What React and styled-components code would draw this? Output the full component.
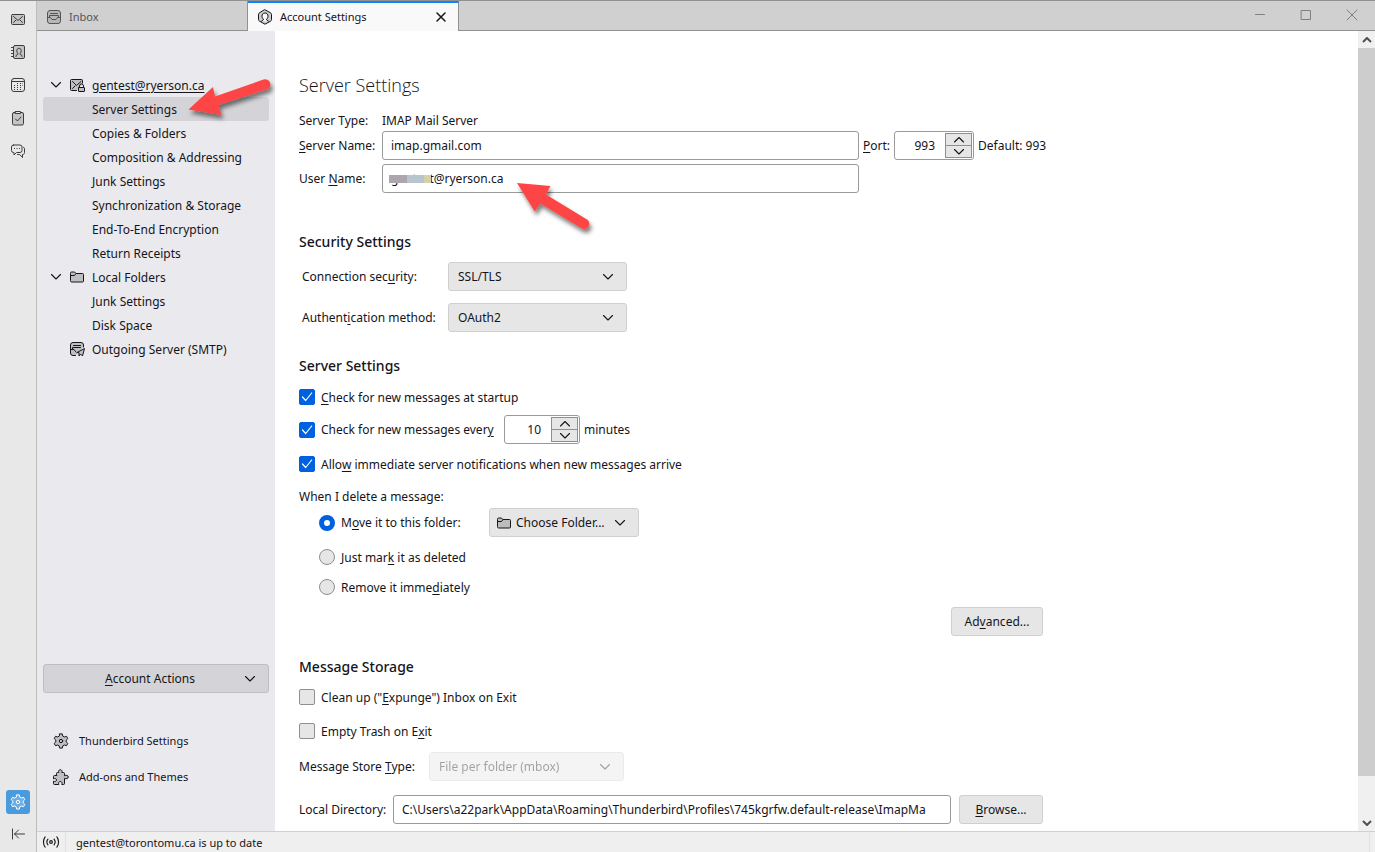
import React from 'react';
import styled, { createGlobalStyle, ThemeProvider } from 'styled-components';

const theme = {
  color: {
    text: '#15141a',
    sidebar: '#eaeaee',
    selected: '#d4d4d8',
    button: '#e6e6e6',
    buttonBorder: '#cfcfcf',
    inputBorder: '#9a9a9a',
    line: '#919191',
    accent: '#0061e0',
    arrow: '#fd4444',
  },
};

const GlobalStyle = createGlobalStyle`
  * {
    box-sizing: border-box;
  }

  body {
    margin: 0;
    font-family: "Noto Sans", "Open Sans", sans-serif;
    font-size: 12px;
    line-height: 21px;
    color: #15141a;
    background-color: #fff;
  }

  button, input, select {
    font: inherit;
    color: inherit;
  }

  u {
    text-underline-offset: 2px;
    text-decoration-thickness: 1px;
  }
`;

const Icon = ({ size = 16, children }) => (
  <svg width={size} height={size} viewBox="0 0 16 16" fill="none" stroke="currentColor" strokeLinecap="round" strokeLinejoin="round" aria-hidden="true">
    {children}
  </svg>
);

const shade = { fill: 'currentColor', fillOpacity: 0.2 };

const MailIcon = () => (
  <Icon>
    <rect x="1.500" y="3.500" width="13" height="10" rx="1" {...shade} />
    <path d="M3.500 5.500l4.500 4 4.500-4M3.500 11.500L6 9M12.500 11.500L10 9" />
  </Icon>
);

const AddressIcon = () => (
  <Icon>
    <rect x="3.500" y="1.500" width="11" height="13" rx="1.500" {...shade} />
    <path d="M1.500 3.500h2M1.500 6.500h2M1.500 9.500h2M1.500 12.500h2M6 12.500v-1l1.800-1.200V9.200C7 8.700 6.800 7.800 6.800 6.500c0-1.300.9-2.200 2.200-2.200s2.200.9 2.200 2.200c0 1.300-.2 2.200-1 2.700v1.100l1.800 1.200v1" />
  </Icon>
);

const CalendarIcon = () => (
  <Icon>
    <rect x="1.500" y="1.500" width="13" height="13" rx="2.500" />
    <path d="M2 4.500h12" />
    <path d="M7 6.500h1M10 6.500h1M12 6.500h.5M4 8.500h1M7 8.500h1M10 8.500h1M12 8.500h.5M4 10.500h1M7 10.500h1M10 10.500h1M4 12.500h1M7 12.500h1M10 12.500h1" strokeLinecap="butt" />
  </Icon>
);

const TasksIcon = () => (
  <Icon>
    <rect x="2.500" y="2.500" width="11" height="12.500" rx="1.500" {...shade} />
    <path d="M5.500 1.500h5v2h-5z" fill="#e8e8e8" />
    <path d="M5.500 9l2 2 3.500-4" />
  </Icon>
);

const ChatIcon = () => (
  <Icon>
    <path d="M3.500 2h6.500a2 2 0 0 1 2 2v3.500a2 2 0 0 1-2 2H6.500L4 12V9.500h-.5a2 2 0 0 1-2-2V4a2 2 0 0 1 2-2z" />
    <path d="M13.500 4.200c.7.300 1 .9 1 1.800v3.500c0 1.300-.7 2-2 2v3l-2.800-3H7.500" />
    <path d="M4 5.500h1M6.500 5.500h1M9 5.500h1" strokeLinecap="butt" />
  </Icon>
);

const GearIcon = () => (
  <Icon>
    <path d="M6.700.9h2.600l.5 2.200 1.500.9 2.200-.7 1.300 2.300-1.600 1.500v1.800l1.600 1.500-1.300 2.300-2.200-.7-1.500.9-.5 2.200H6.700l-.5-2.200-1.500-.9-2.200.7-1.300-2.300 1.600-1.500V7.100L1.200 5.600l1.300-2.300 2.200.7 1.500-.9z" {...shade} />
    <circle cx="8" cy="8" r="1.700" />
  </Icon>
);

const PuzzleIcon = () => (
  <Icon>
    <path d="M3.500 5.500v-1a1 1 0 0 1 1-1h1.300C5.200 2 5.900.7 7.300.7S9.400 2 8.800 3.500h1.700a1 1 0 0 1 1 1v2.200c1.700-.9 3.800-.3 3.800 1.300s-2.100 2.200-3.800 1.300v5.200a1 1 0 0 1-1 1H8.800c.6-1.700 0-3-1.500-3s-2.100 1.300-1.500 3H1.500a1 1 0 0 1-1-1v-2.300c1.500.6 3 .2 3-1.200s-1.500-1.800-3-1.200V7.500a1 1 0 0 1 1-1h2z" {...shade} />
  </Icon>
);

const CollapseIcon = () => (
  <Icon>
    <path d="M2.500 3v10M4.500 8h10M8.500 4l-4 4 4 4" />
  </Icon>
);

const InboxIcon = () => (
  <Icon>
    <rect x="1.500" y="1.500" width="13" height="13" rx="2.500" {...shade} />
    <path d="M4.500 4.500h7M2 8.500h2.500l1.500 2h4l1.500-2H14M3.500 8V6.500h9V8" />
  </Icon>
);

const AccountIcon = () => (
  <Icon>
    <path d="M8 .8l5.500 3c.6.400 1 .8 1 1.500v5.400c0 .7-.4 1.100-1 1.500L8 15.200l-5.500-3c-.6-.4-1-.8-1-1.500V5.300c0-.7.4-1.100 1-1.500z" {...shade} />
    <path d="M4.500 12.200l2.200-1.700c-1.200-.8-1.700-2-1.700-3.300 0-1.900 1.200-3.200 3-3.200s3 1.300 3 3.200c0 1.300-.5 2.500-1.700 3.300l2.200 1.700" fill="#f9f9fa" />
  </Icon>
);

const MailLockIcon = () => (
  <Icon>
    <path d="M7.500 13.500h-5a1 1 0 0 1-1-1v-9a1 1 0 0 1 1-1h10a1 1 0 0 1 1 1V6" {...shade} />
    <path d="M3.500 4.500l4 4 4.500-4M3.500 11.500L6 9" />
    <rect x="9.500" y="10.500" width="6" height="4" rx=".5" {...shade} />
    <path d="M10.500 10.500V9a2 2 0 0 1 4 0v1.500" />
  </Icon>
);

const FolderIcon = () => (
  <Icon>
    <path d="M1.500 4a1 1 0 0 1 1-1h3l1.500 1.500h6.500a1 1 0 0 1 1 1v6.500a1 1 0 0 1-1 1h-11a1 1 0 0 1-1-1z" {...shade} />
    <path d="M1.500 6.500h4L7 4.500" />
  </Icon>
);

const OutgoingIcon = () => (
  <Icon>
    <path d="M6.500 14.500H4a2.500 2.500 0 0 1-2.500-2.500V4A2.500 2.500 0 0 1 4 1.500h8A2.500 2.500 0 0 1 14.500 4v2" {...shade} />
    <path d="M4.500 4.500h7M2 8.500h3L6.500 10.500M3.500 8.500v-2h8" />
    <path d="M8 11.500l7.500-4-2 7.500-2-2-1.500 2v-3z" {...shade} />
  </Icon>
);

const ActivityIcon = () => (
  <Icon size={18}>
    <circle cx="8" cy="8" r="1.200" />
    <path d="M5.300 5.500c-1.200 1.500-1.200 3.500 0 5M10.700 5.500c1.200 1.500 1.200 3.500 0 5M2.800 3.500c-2 2.500-2 6.500 0 9M13.200 3.500c2 2.500 2 6.500 0 9" />
  </Icon>
);

const Chevron = ({ up }) => (
  <svg width="12" height="8" viewBox="0 0 12 8" fill="none" stroke="currentColor" strokeWidth="1.100" strokeLinecap="round" strokeLinejoin="round" aria-hidden="true">
    <path d={up ? 'M1.500 6L6 1.500 10.500 6' : 'M1.500 1.500L6 6l4.500-4.500'} />
  </svg>
);

const railItems = [
  { label: 'Mail', icon: <MailIcon /> },
  { label: 'Address Book', icon: <AddressIcon /> },
  { label: 'Calendar', icon: <CalendarIcon /> },
  { label: 'Tasks', icon: <TasksIcon /> },
  { label: 'Chat', icon: <ChatIcon /> },
];

const accountPages = [
  'Server Settings',
  'Copies & Folders',
  'Composition & Addressing',
  'Junk Settings',
  'Synchronization & Storage',
  'End-To-End Encryption',
  'Return Receipts',
];

const ArrowShadow = ({ id }) => (
  <filter id={id} x="-20%" y="-20%" width="150%" height="160%">
    <feDropShadow dx="2" dy="4" stdDeviation="2" floodColor="#000" floodOpacity="0.5" />
  </filter>
);

const SidebarArrow = () => (
  <ArrowSvg $left={140} $top={-24} width="100" height="56" viewBox="183 73 100 56" aria-hidden="true">
    <ArrowShadow id="sidebar-arrow" />
    <path d="M188.500 109.500L213 87l2 9.500 48.500-17a5 5 0 0 1 3.500 9.800L218.500 105l2.800 10z" filter="url(#sidebar-arrow)" />
  </ArrowSvg>
);

const UserArrow = () => (
  <ArrowSvg $left={128} $top={12} width="90" height="64" viewBox="510 176 90 64" aria-hidden="true">
    <ArrowShadow id="user-arrow" />
    <path d="M517 183l33.500 3-4.500 8.500 41 25a5 5 0 0 1-5.500 8.700L540.300 203.500l-5.600 8z" filter="url(#user-arrow)" />
  </ArrowSvg>
);

const Check = ({ id, checked, children }) => (
  <CheckLabel htmlFor={id}>
    <BoxWrap>
      <CheckBox id={id} type="checkbox" defaultChecked={checked} />
      <svg width="16" height="16" viewBox="0 0 16 16" fill="none" stroke="#fff" strokeWidth="1.200" strokeLinecap="round" strokeLinejoin="round" aria-hidden="true">
        {checked && <path d="M3.500 8l3.200 3.500 6-7.500" />}
      </svg>
    </BoxWrap>
    <span>{children}</span>
  </CheckLabel>
);

const Spin = ({ id, value, width }) => (
  <SpinBox $width={width}>
    <SpinInput id={id} type="text" inputMode="numeric" aria-label={id} defaultValue={value} />
    <SpinButtons>
      <StepButton type="button" aria-label="Increase"><Chevron up /></StepButton>
      <StepButton type="button" aria-label="Decrease"><Chevron /></StepButton>
    </SpinButtons>
  </SpinBox>
);

const Picker = ({ id, value, width, disabled }) => (
  <SelectWrap $width={width} $disabled={disabled}>
    <Select id={id} defaultValue={value} disabled={disabled}>
      <option>{value}</option>
    </Select>
    <Chevron />
  </SelectWrap>
);

export default function App() {
  return (
    <ThemeProvider theme={theme}>
      <GlobalStyle />
      <Window>
        <Rail>
          {railItems.map((item) => (
            <RailButton key={item.label} type="button" aria-label={item.label}>{item.icon}</RailButton>
          ))}
          <RailBottom>
            <ActiveRailButton type="button" aria-label="Settings"><GearIcon /></ActiveRailButton>
            <CollapseButton type="button" aria-label="Hide toolbar"><CollapseIcon /></CollapseButton>
          </RailBottom>
        </Rail>
        <Workspace>
          <TabBar>
            <Tab>
              <InboxIcon />
              <span>Inbox</span>
            </Tab>
            <Tab $active>
              <AccountIcon />
              <span>Account Settings</span>
              <CloseTab type="button" aria-label="Close tab">
                <Icon><path d="M4 4l8 8M12 4l-8 8" strokeWidth="1.500" /></Icon>
              </CloseTab>
            </Tab>
            <WindowControls>
              <WindowButton type="button" aria-label="Minimize">
                <Icon><path d="M3.500 6.500h9" /></Icon>
              </WindowButton>
              <WindowButton type="button" aria-label="Maximize">
                <Icon><path d="M3.500 2.500h9v9h-9z" strokeLinejoin="miter" /></Icon>
              </WindowButton>
              <WindowButton type="button" aria-label="Close">
                <Icon><path d="M3 2l10 10M13 2L3 12" /></Icon>
              </WindowButton>
            </WindowControls>
          </TabBar>
          <Body>
            <Sidebar>
              <Tree>
                <TreeItem>
                  <Twisty><Chevron /></Twisty>
                  <TreeIcon><MailLockIcon /></TreeIcon>
                  <TreeLink href="#account"><u>gentest@ryerson.ca</u></TreeLink>
                </TreeItem>
                {accountPages.map((page, i) => (
                  <TreeItem key={page} $child $selected={i === 0}>
                    <TreeLink href="#page">{page}</TreeLink>
                    {i === 0 && <SidebarArrow />}
                  </TreeItem>
                ))}
                <TreeItem>
                  <Twisty><Chevron /></Twisty>
                  <TreeIcon><FolderIcon /></TreeIcon>
                  <TreeLink href="#local">Local Folders</TreeLink>
                </TreeItem>
                <TreeItem $child><TreeLink href="#junk">Junk Settings</TreeLink></TreeItem>
                <TreeItem $child><TreeLink href="#disk">Disk Space</TreeLink></TreeItem>
                <TreeItem>
                  <Twisty />
                  <TreeIcon><OutgoingIcon /></TreeIcon>
                  <TreeLink href="#smtp">Outgoing Server (SMTP)</TreeLink>
                </TreeItem>
              </Tree>
              <ActionsButton type="button">
                <ActionsText><u>A</u>ccount Actions</ActionsText>
                <Chevron />
              </ActionsButton>
              <FooterLinks>
                <FooterLink href="#settings"><GearIcon />Thunderbird Settings</FooterLink>
                <FooterLink href="#addons"><PuzzleIcon />Add-ons and Themes</FooterLink>
              </FooterLinks>
            </Sidebar>
            <Main>
              <Content>
                <Title>Server Settings</Title>
                <ServerRow>
                  <span>Server Type:</span>
                  <span>IMAP Mail Server</span>
                </ServerRow>
                <ServerRow>
                  <label htmlFor="server-name"><u>S</u>erver Name:</label>
                  <TextInput id="server-name" type="text" defaultValue="imap.gmail.com" />
                  <PortGroup>
                    <label htmlFor="port"><u>P</u>ort:</label>
                    <Spin id="port" value="993" width={80} />
                    <span>Default: 993</span>
                  </PortGroup>
                </ServerRow>
                <ServerRow $top={4}>
                  <label htmlFor="user-name">User <u>N</u>ame:</label>
                  <UserField>
                    <TextInput id="user-name" type="text" defaultValue="gentest@ryerson.ca" />
                    <Mask aria-hidden="true"><i /><i /><i /></Mask>
                    <UserArrow />
                  </UserField>
                </ServerRow>

                <Heading $top={37}>Security Settings</Heading>
                <SecurityGrid>
                  <label htmlFor="security">Connection sec<u>u</u>rity:</label>
                  <Picker id="security" value="SSL/TLS" width={179} />
                  <label htmlFor="auth">Authent<u>i</u>cation method:</label>
                  <Picker id="auth" value="OAuth2" width={179} />
                </SecurityGrid>

                <Heading $top={22}>Server Settings</Heading>
                <Row $top={8}>
                  <Check id="startup" checked><u>C</u>heck for new messages at startup</Check>
                </Row>
                <IntervalRow $top={7}>
                  <Check id="interval" checked>Check for new messages ever<u>y</u></Check>
                  <Spin id="minutes" value="10" width={76} />
                  <span>minutes</span>
                </IntervalRow>
                <Row $top={9}>
                  <Check id="notify" checked>Allo<u>w</u> immediate server notifications when new messages arrive</Check>
                </Row>
                <Row $top={10}>When I delete a message:</Row>
                <RadioRow $top={1}>
                  <FolderRadio htmlFor="move">
                    <Radio id="move" name="delete" type="radio" defaultChecked />
                    <span>M<u>o</u>ve it to this folder:</span>
                  </FolderRadio>
                  <FolderButton type="button"><FolderIcon />Choose Folder...<Chevron /></FolderButton>
                </RadioRow>
                <RadioRow $top={9}>
                  <CheckLabel htmlFor="mark">
                    <Radio id="mark" name="delete" type="radio" />
                    <span>Just mar<u>k</u> it as deleted</span>
                  </CheckLabel>
                </RadioRow>
                <RadioRow $top={8}>
                  <CheckLabel htmlFor="remove">
                    <Radio id="remove" name="delete" type="radio" />
                    <span>Remove it imme<u>d</u>iately</span>
                  </CheckLabel>
                </RadioRow>
                <EndRow $top={9}>
                  <PushButton type="button" $width={92}>Ad<u>v</u>anced...</PushButton>
                </EndRow>

                <Heading $top={19}>Message Storage</Heading>
                <Row $top={7}>
                  <Check id="expunge">Clean up ("<u>E</u>xpunge") Inbox on Exit</Check>
                </Row>
                <Row $top={12}>
                  <Check id="trash">Empty Trash on E<u>x</u>it</Check>
                </Row>
                <StoreRow $top={10}>
                  <label htmlFor="store">Message Store <u>T</u>ype:</label>
                  <Picker id="store" value="File per folder (mbox)" width={195} disabled />
                </StoreRow>
                <DirectoryRow $top={14}>
                  <label htmlFor="directory">Local Directory:</label>
                  <TextInput id="directory" type="text" readOnly value="C:\Users\a22park\AppData\Roaming\Thunderbird\Profiles\745kgrfw.default-release\ImapMa" />
                  <PushButton type="button" $width={84}><u>B</u>rowse...</PushButton>
                </DirectoryRow>
              </Content>
            </Main>
            <ScrollBar aria-hidden="true">
              <ScrollEnd><svg width="10" height="6" viewBox="0 0 10 6"><path d="M1 5l4-4 4 4" fill="none" stroke="#505050" strokeWidth="2" /></svg></ScrollEnd>
              <ScrollTrack><ScrollThumb /></ScrollTrack>
              <ScrollEnd><svg width="10" height="6" viewBox="0 0 10 6"><path d="M1 1l4 4 4-4" fill="none" stroke="#505050" strokeWidth="2" /></svg></ScrollEnd>
            </ScrollBar>
          </Body>
          <StatusBar>
            <StatusIcon><ActivityIcon /></StatusIcon>
            <StatusText>gentest@torontomu.ca is up to date</StatusText>
          </StatusBar>
        </Workspace>
      </Window>
    </ThemeProvider>
  );
}

const Window = styled.div`
  display: flex;
  min-height: 100vh;
  border-top: 1px solid ${(props) => props.theme.color.line};
`;

const Rail = styled.nav`
  display: flex;
  flex-direction: column;
  align-items: center;
  width: 37px;
  padding-top: 1px;
  background-color: #e8e8e8;
  border-right: 1px solid #bdbdbd;
`;

const RailButton = styled.button`
  display: flex;
  align-items: center;
  justify-content: center;
  width: 32px;
  height: 33px;
  padding: 0;
  border: none;
  background: none;
  color: #3c3c3c;
`;

const RailBottom = styled.div`
  display: flex;
  flex-direction: column;
  align-items: center;
  gap: 8px;
  margin-top: auto;
  padding-bottom: 6px;
`;

const ActiveRailButton = styled(RailButton)`
  width: 24px;
  height: 24px;
  border-radius: 3px;
  background-color: #4a9ade;
  color: #fff;
`;

const CollapseButton = styled(RailButton)`
  height: 24px;
`;

const Workspace = styled.div`
  display: flex;
  flex-direction: column;
  flex: 1;
  min-width: 0;
`;

const TabBar = styled.div`
  display: flex;
  height: 30px;
  background-color: #d0d0d0;
`;

const Tab = styled.div`
  display: flex;
  align-items: center;
  gap: 7px;
  width: 211px;
  padding: ${(props) => (props.$active ? '0 9px' : '2px 9px 0')};
  font-size: 11px;
  line-height: 20px;
  color: ${(props) => (props.$active ? '#15141a' : '#555')};
  background-color: ${(props) => (props.$active ? '#f9f9fa' : 'transparent')};
  border-right: 1px solid ${(props) => props.theme.color.line};
  border-top: ${(props) => (props.$active ? '2px solid #0a84ff' : 'none')};
  border-bottom: ${(props) => (props.$active ? 'none' : `1px solid ${props.theme.color.line}`)};
`;

const CloseTab = styled.button`
  display: flex;
  margin-left: auto;
  padding: 0;
  border: none;
  background: none;
`;

const WindowControls = styled.div`
  display: flex;
  flex: 1;
  justify-content: flex-end;
  border-bottom: 1px solid ${(props) => props.theme.color.line};
`;

const WindowButton = styled.button`
  display: flex;
  align-items: center;
  justify-content: center;
  width: 46px;
  padding: 0;
  border: none;
  background: none;
  color: #808080;
`;

const Body = styled.div`
  display: flex;
  flex: 1;
`;

const Sidebar = styled.aside`
  display: flex;
  flex-direction: column;
  width: 238px;
  padding: 42px 6px 36px;
  background-color: ${(props) => props.theme.color.sidebar};
`;

const Tree = styled.ul`
  margin: 0;
  padding: 0;
  list-style: none;
`;

const TreeItem = styled.li`
  position: relative;
  display: flex;
  align-items: center;
  height: 24px;
  padding-left: ${(props) => (props.$child ? '49px' : '7px')};
  border-radius: 3px;
  background-color: ${(props) => (props.$selected ? props.theme.color.selected : 'transparent')};
`;

const Twisty = styled.span`
  display: flex;
  width: 19px;
`;

const TreeIcon = styled.span`
  display: flex;
  width: 23px;
`;

const TreeLink = styled.a`
  color: inherit;
  text-decoration: none;
`;

const ActionsButton = styled.button`
  display: flex;
  align-items: center;
  height: 29px;
  margin-top: auto;
  padding: 0 12px;
  border: 1px solid #bfbfc3;
  border-radius: 3px;
  background-color: ${(props) => props.theme.color.selected};
`;

const ActionsText = styled.span`
  flex: 1;
`;

const FooterLinks = styled.div`
  display: flex;
  flex-direction: column;
  margin-top: 30px;
`;

const FooterLink = styled.a`
  display: flex;
  align-items: center;
  gap: 10px;
  height: 36px;
  padding-left: 10px;
  font-size: 11px;
  line-height: 20px;
  color: inherit;
  text-decoration: none;
`;

const Main = styled.main`
  flex: 1;
  min-width: 0;
  padding: 42px 24px 7px;
`;

const Content = styled.div`
  max-width: 748px;
`;

const Title = styled.h1`
  margin: 0 0 13px;
  font-family: "Open Sans", "Noto Sans", sans-serif;
  font-size: 18px;
  font-weight: 300;
  line-height: 24px;
`;

const ServerRow = styled.div`
  display: grid;
  grid-template-columns: 83px minmax(0, 1fr) 188px;
  align-items: center;
  margin-top: ${(props) => props.$top || 0}px;
`;

const TextInput = styled.input`
  width: 100%;
  min-width: 0;
  height: 29px;
  padding: 0 8px;
  border: 1px solid ${(props) => props.theme.color.inputBorder};
  border-radius: 3px;
  background-color: #fff;
`;

const PortGroup = styled.div`
  display: flex;
  align-items: center;
  gap: 4px;
  padding-left: 4px;
  white-space: nowrap;

  label {
    width: 27px;
  }
`;

const UserField = styled.div`
  position: relative;
`;

/* covers the first part of the user name */
const Mask = styled.span`
  position: absolute;
  top: 11px;
  left: 7px;
  display: flex;
  height: 8px;

  i {
    width: 18px;
    background-color: #ada6af;
  }

  i:nth-child(2) {
    width: 17px;
    background-color: #b7c6cd;
  }

  i:nth-child(3) {
    width: 7px;
    background-color: #d6d1a8;
  }
`;

const ArrowSvg = styled.svg`
  position: absolute;
  top: ${(props) => props.$top}px;
  left: ${(props) => props.$left}px;
  z-index: 1;
  fill: ${(props) => props.theme.color.arrow};
  pointer-events: none;
`;

const SpinBox = styled.div`
  display: flex;
  width: ${(props) => props.$width}px;
  height: 29px;
  padding: 1px;
  border: 1px solid ${(props) => props.theme.color.inputBorder};
  border-radius: 3px;
  background-color: #fff;
`;

const SpinInput = styled.input`
  flex: 1;
  min-width: 0;
  padding: 0 10px 0 0;
  border: none;
  background: none;
  text-align: right;
`;

const SpinButtons = styled.div`
  display: flex;
  flex-direction: column;
  width: 27px;
  border: 1px solid #8f8f8f;
`;

const StepButton = styled.button`
  display: flex;
  flex: 1;
  align-items: center;
  justify-content: center;
  min-height: 0;
  padding: 0;
  border: none;
  background-color: ${(props) => props.theme.color.button};

  & + & {
    border-top: 1px solid #8f8f8f;
  }
`;

const Heading = styled.h2`
  margin: ${(props) => props.$top}px 0 0;
  font-size: 14px;
  font-weight: 500;
  line-height: 24px;
`;

const SecurityGrid = styled.div`
  display: grid;
  grid-template-columns: 146px 1fr;
  row-gap: 12px;
  align-items: center;
  margin-top: 8px;
  padding-left: 3px;
`;

const SelectWrap = styled.div`
  position: relative;
  width: ${(props) => props.$width}px;
  opacity: ${(props) => (props.$disabled ? 0.4 : 1)};

  svg {
    position: absolute;
    top: 11px;
    right: 13px;
    pointer-events: none;
  }
`;

const Select = styled.select`
  display: block;
  width: 100%;
  height: 29px;
  padding: 0 30px 0 9px;
  appearance: none;
  border: 1px solid ${(props) => props.theme.color.buttonBorder};
  border-radius: 3px;
  background-color: ${(props) => props.theme.color.button};
  opacity: 1;
`;

const Row = styled.div`
  display: flex;
  align-items: center;
  gap: 4px;
  min-height: 22px;
  margin-top: ${(props) => props.$top}px;
`;

const RadioRow = styled(Row)`
  padding-left: 20px;
`;

const IntervalRow = styled(Row)`
  label {
    min-width: 201px;
  }
`;

const EndRow = styled(Row)`
  justify-content: flex-end;
  padding-right: 4px;
`;

const StoreRow = styled(Row)`
  gap: 8px;

  label {
    min-width: 122px;
  }
`;

const DirectoryRow = styled(Row)`
  padding-right: 4px;
  white-space: nowrap;

  label {
    min-width: 90px;
  }

  button {
    flex-shrink: 0;
    margin-left: 4px;
  }
`;

const CheckLabel = styled.label`
  display: flex;
  align-items: center;
  gap: 6px;
`;

const FolderRadio = styled(CheckLabel)`
  width: 166px;
`;

const BoxWrap = styled.span`
  display: grid;

  > * {
    grid-area: 1 / 1;
  }

  svg {
    pointer-events: none;
  }
`;

const CheckBox = styled.input`
  width: 16px;
  height: 16px;
  margin: 0;
  appearance: none;
  border: 1px solid #8f8f8f;
  border-radius: 2px;
  background-color: ${(props) => props.theme.color.button};

  &:checked {
    border-color: ${(props) => props.theme.color.accent};
    background-color: ${(props) => props.theme.color.accent};
  }
`;

const Radio = styled.input`
  width: 16px;
  height: 16px;
  margin: 0;
  appearance: none;
  border: 1px solid #8f8f8f;
  border-radius: 50%;
  background-color: ${(props) => props.theme.color.button};

  &:checked {
    border: 5px solid ${(props) => props.theme.color.accent};
    background-color: #fff;
  }
`;

const PushButton = styled.button`
  width: ${(props) => props.$width}px;
  height: 29px;
  padding: 0;
  border: 1px solid ${(props) => props.theme.color.buttonBorder};
  border-radius: 3px;
  background-color: ${(props) => props.theme.color.button};
`;

const FolderButton = styled(PushButton)`
  display: flex;
  align-items: center;
  gap: 4px;
  width: 150px;
  padding: 0 12px 0 6px;
  white-space: nowrap;

  svg:last-child {
    margin-left: auto;
  }
`;

const ScrollBar = styled.div`
  display: flex;
  flex-direction: column;
  width: 17px;
  background-color: #f0f0f0;
`;

const ScrollEnd = styled.div`
  display: flex;
  align-items: center;
  justify-content: center;
  height: 17px;
`;

const ScrollTrack = styled.div`
  flex: 1;
`;

const ScrollThumb = styled.div`
  height: 95%;
  background-color: #cdcdcd;
`;

const StatusBar = styled.footer`
  display: flex;
  height: 21px;
  border-top: 1px solid #d0d0d0;
  background-color: #efefef;
  font-size: 11px;
  line-height: 22px;
`;

const StatusIcon = styled.div`
  display: flex;
  align-items: center;
  justify-content: center;
  width: 29px;
  border-right: 1px solid #e0e0e0;
`;

const StatusText = styled.span`
  flex: 1;
  margin: 0 5px 0 10px;
  border-right: 1px solid #e0e0e0;
`;
